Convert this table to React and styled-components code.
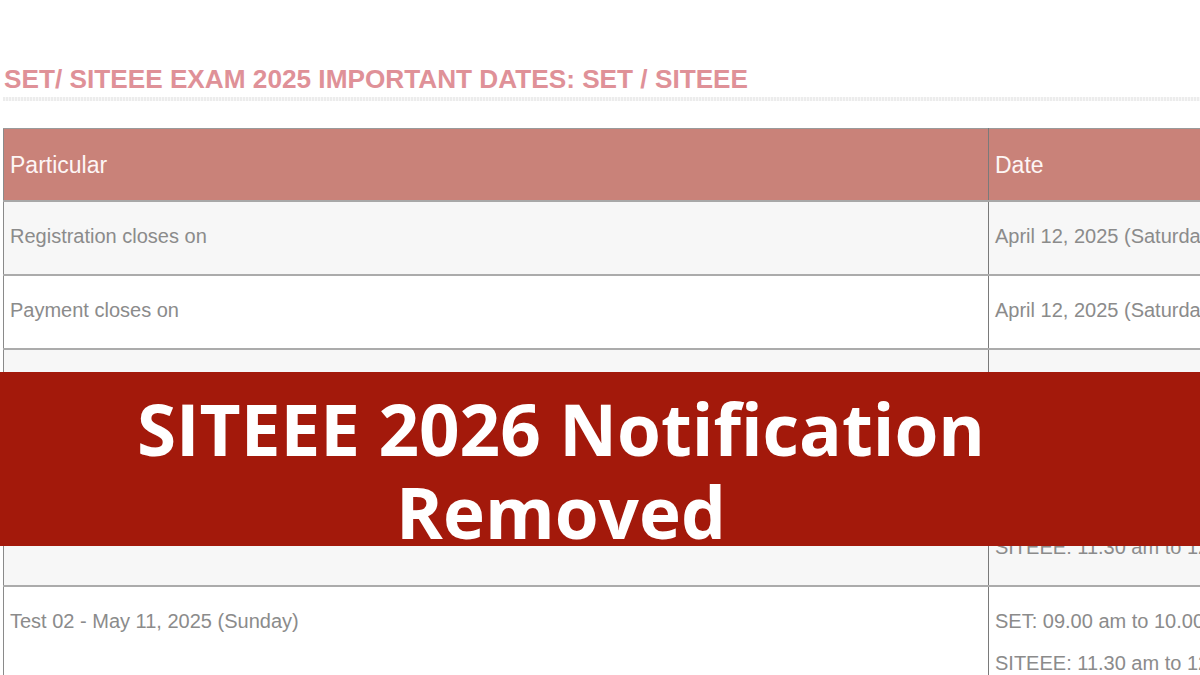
import React from "react";
import styled, { createGlobalStyle } from "styled-components";

const Global = createGlobalStyle`
  html, body {
    margin: 0;
    padding: 0;
    background: #ffffff;
  }
`;

const Page = styled.div`
  position: relative;
  width: 1200px;
  height: 675px;
  overflow: hidden;
  background: #ffffff;
  padding-left: 3px;
  box-sizing: border-box;
  font-family: "Liberation Sans", Arial, sans-serif;
`;

const Title = styled.h2`
  margin: 64px 0 0 1px;
  padding-bottom: 3px;
  font-size: 26.2px;
  line-height: 30px;
  font-weight: 700;
  color: #df9198;
  white-space: nowrap;
`;

const DotLine = styled.div`
  height: 4px;
  width: 1300px;
  background: repeating-linear-gradient(90deg, #ececec 0 2px, #f8f8f8 2px 3px);
`;

const Table = styled.table`
  margin-top: 27px;
  width: 1300px;
  border-collapse: collapse;
  table-layout: fixed;
  border-left: 1px solid #8a8a8a;
  border-top: 1px solid #9a9a9a;
`;

const HeadCell = styled.th`
  background: #c98279;
  color: #fdf6f5;
  font-weight: 400;
  font-size: 23px;
  text-align: left;
  height: 72px;
  padding: 3px 6px 0;
  box-sizing: border-box;
  border-right: 1px solid #7a7a7a;
  border-bottom: 2px solid #a8a8a8;
`;

const Row = styled.tr`
  background: ${(p) => (p.$odd ? "#f7f7f7" : "#ffffff")};
`;

const Cell = styled.td`
  vertical-align: top;
  padding: ${(p) => p.$top || 19}px 6px 11px;
  border-right: 1px solid #7a7a7a;
  border-bottom: 2px solid #ababab;
  color: #8b8b8b;
  font-size: 20px;
`;

const Line = styled.p`
  margin: 0 0 12px;
  line-height: 30px;
  white-space: nowrap;
`;

const Banner = styled.div`
  position: absolute;
  left: 0;
  top: 372px;
  width: 1200px;
  height: 174px;
  background: #a3190b;
  box-sizing: border-box;
  padding: 15px 78px 0 0;
  text-align: center;
  color: #ffffff;
  font-family: "Open Sans", "Noto Sans", sans-serif;
  font-weight: 700;
  font-size: 71px;
  line-height: 83px;
`;

const rows = [
  { left: ["Registration closes on"], right: ["April 12, 2025 (Saturday)"] },
  { left: ["Payment closes on"], right: ["April 12, 2025 (Saturday)"] },
  {
    left: ["Test 01 - May 10, 2025 (Saturday)"],
    right: [
      "Test 01 - May 10, 2025 (Saturday)",
      "Reporting: 08.00 am",
      "SET: 09.00 am to 10.00 am",
      "SITEEE: 11.30 am to 12.30 pm",
    ],
    top: 56,
  },
  {
    left: ["Test 02 - May 11, 2025 (Sunday)"],
    right: ["SET: 09.00 am to 10.00 am", "SITEEE: 11.30 am to 12.30 pm"],
  },
];

export default function App() {
  return (
    <Page>
      <Global />
      <Title>SET/ SITEEE EXAM 2025 IMPORTANT DATES: SET / SITEEE</Title>
      <DotLine />
      <Table>
        <colgroup>
          <col style={{ width: 985 }} />
          <col />
        </colgroup>
        <thead>
          <tr>
            <HeadCell>Particular</HeadCell>
            <HeadCell>Date</HeadCell>
          </tr>
        </thead>
        <tbody>
          {rows.map((r, i) => (
            <Row key={i} $odd={i % 2 === 0}>
              <Cell>
                {r.left.map((t) => (
                  <Line key={t}>{t}</Line>
                ))}
              </Cell>
              <Cell $top={r.top}>
                {r.right.map((t) => (
                  <Line key={t}>{t}</Line>
                ))}
              </Cell>
            </Row>
          ))}
        </tbody>
      </Table>
      <Banner>
        SITEEE 2026 Notification
        <br />
        Removed
      </Banner>
    </Page>
  );
}
